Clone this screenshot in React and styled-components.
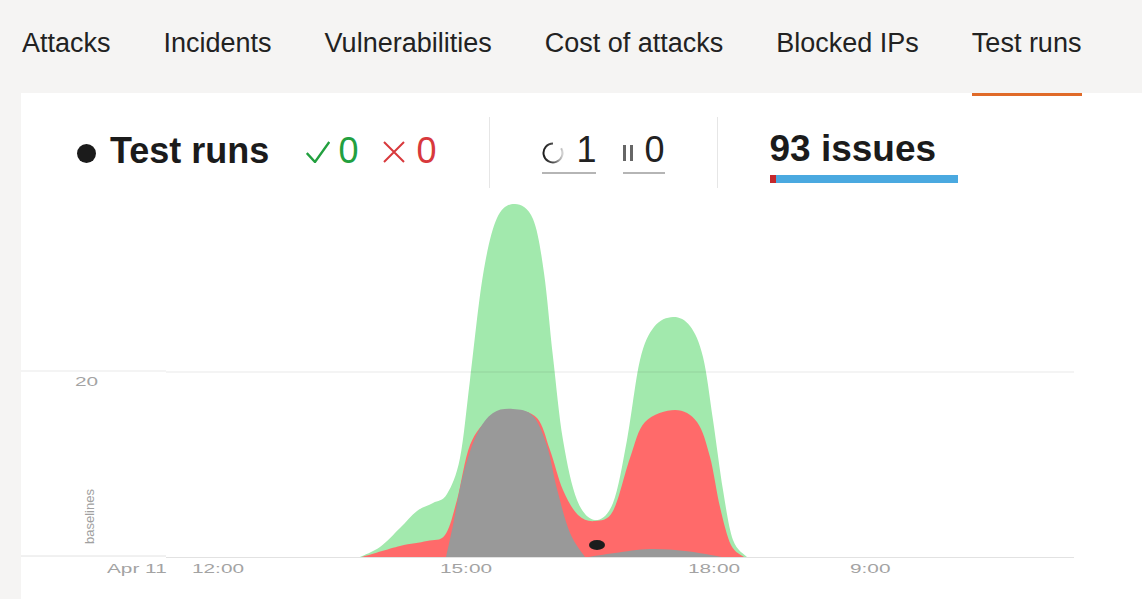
import React from "react";
import styled, { createGlobalStyle } from "styled-components";

const GlobalStyle = createGlobalStyle`
  html, body { margin: 0; padding: 0; }
  body {
    background: #f5f4f3;
    font-family: "Liberation Sans", Arial, sans-serif;
    overflow: hidden;
  }
`;

const Page = styled.div`
  width: 1142px;
  height: 599px;
  display: flex;
  flex-direction: column;
`;

const TabBar = styled.nav`
  display: flex;
  align-items: flex-start;
  gap: 53px;
  height: 93px;
  padding: 28px 0 0 22px;
  box-sizing: border-box;
`;

const Tab = styled.div`
  position: relative;
  font-size: 27px;
  line-height: 31px;
  color: #222;
  height: 65px;
  &::after {
    content: "";
    position: absolute;
    left: 0;
    right: -1px;
    bottom: -3px;
    height: 3px;
    background: ${(p) => (p.$active ? "#e06a28" : "transparent")};
  }
`;

const Panel = styled.section`
  flex: 1;
  margin-left: 21px;
  background: #fff;
  display: flex;
  flex-direction: column;
`;

const Header = styled.div`
  display: flex;
  height: 71px;
  margin: 24px 0 2px;
  padding-left: 56px;
`;

const TitleGroup = styled.div`
  display: flex;
  align-items: center;
  padding: 0 53px 4px 0;
`;

const Bullet = styled.span`
  width: 19px;
  height: 19px;
  border-radius: 50%;
  background: #1b1b1b;
  margin-right: 14px;
  margin-top: 6px;
`;

const Title = styled.h1`
  margin: 0 37px 0 0;
  font-size: 36px;
  line-height: 36px;
  font-weight: 700;
  color: #1b1b1b;
`;

const Num = styled.span`
  font-size: 36px;
  line-height: 36px;
  color: ${(p) => p.$color || "#222"};
`;

const Status = styled.span`
  display: inline-flex;
  align-items: center;
  gap: ${(p) => p.$gap}px;
  margin-left: ${(p) => p.$offset || 0}px;
  svg { display: block; margin-top: 2px; }
`;

const MiddleGroup = styled.div`
  display: flex;
  align-items: center;
  gap: 27px;
  padding: 0 52px 0 52px;
  border-left: 1px solid #e6e6e6;
  border-right: 1px solid #e6e6e6;
`;

const Counter = styled.span`
  display: inline-flex;
  align-items: center;
  gap: ${(p) => p.$gap}px;
  padding-bottom: 4px;
  border-bottom: 2px solid #b5b5b5;
  svg { display: block; margin-top: 6px; }
`;

const IssuesGroup = styled.div`
  display: flex;
  flex-direction: column;
  justify-content: center;
  padding: 9px 0 0 52px;
`;

const IssuesTitle = styled.div`
  font-size: 37px;
  line-height: 36px;
  font-weight: 700;
  color: #1b1b1b;
`;

const IssueBar = styled.div`
  display: flex;
  width: 188px;
  height: 8px;
  margin-top: 8px;
  background: #4aa9e0;
`;

const BarSegment = styled.span`
  width: ${(p) => p.$w}px;
  background: ${(p) => p.$color};
`;

const ChartSvg = styled.svg`
  display: block;
  width: 1121px;
  height: 409px;
  font-family: "Liberation Sans", Arial, sans-serif;
`;

function smooth(pts) {
  let d = `M${pts[0][0]},${pts[0][1]}`;
  for (let i = 0; i < pts.length - 1; i++) {
    const p0 = pts[i - 1] || pts[i];
    const p1 = pts[i];
    const p2 = pts[i + 1];
    const p3 = pts[i + 2] || p2;
    const c1x = p1[0] + (p2[0] - p0[0]) / 6;
    const c1y = p1[1] + (p2[1] - p0[1]) / 6;
    const c2x = p2[0] - (p3[0] - p1[0]) / 6;
    const c2y = p2[1] - (p3[1] - p1[1]) / 6;
    d += ` C${c1x.toFixed(1)},${c1y.toFixed(1)} ${c2x.toFixed(1)},${c2y.toFixed(1)} ${p2[0]},${p2[1]}`;
  }
  return d + " Z";
}

const GREEN = [
  [360, 557], [380, 547], [400, 528], [417, 511], [433, 503], [447, 494],
  [460, 458], [470, 380], [483, 275], [497, 218], [515, 204], [533, 219],
  [544, 273], [553, 357], [563, 440], [577, 500], [595, 520], [613, 503],
  [627, 440], [640, 360], [654, 327], [673, 317], [690, 326], [703, 357],
  [713, 420], [723, 490], [733, 540], [747, 557],
];

const RED = [
  [362, 557], [400, 546], [427, 541], [445, 535], [457, 500], [470, 445],
  [490, 418], [513, 410], [537, 418], [550, 450], [563, 490], [578, 515],
  [595, 521], [613, 511], [630, 458], [645, 422], [675, 410], [697, 422],
  [710, 457], [720, 507], [731, 545], [744, 557],
];

const GRAY = [
  [446, 557], [453, 525], [463, 475], [477, 434], [493, 413], [513, 409],
  [533, 416], [547, 446], [557, 489], [570, 533], [585, 557],
];

const GRAY2 = [
  [588, 557], [615, 553], [650, 549], [685, 551], [722, 557],
];

const XLabel = ({ x, children }) => (
  <g transform={`translate(${x},573) scale(1.6,1)`}>
    <text x="0" y="0" fontSize="13" fill="#a3a3a3">{children}</text>
  </g>
);

function Chart() {
  return (
    <ChartSvg viewBox="21 190 1121 409">
      <path d={smooth(GREEN)} fill="#a2e9ad" />
      <path d={smooth(RED)} fill="#ff6a6a" />
      <path d={smooth(GRAY)} fill="#999999" />
      <path d={smooth(GRAY2)} fill="#999999" />
      <ellipse cx="597" cy="545" rx="8" ry="5" fill="#1c1c1c" />
      <line x1="21" y1="371" x2="166" y2="371" stroke="rgba(0,0,0,0.09)" strokeWidth="1" />
      <line x1="166" y1="372" x2="1074" y2="372" stroke="rgba(0,0,0,0.09)" strokeWidth="1" />
      <line x1="21" y1="556" x2="166" y2="556" stroke="#e2e2e2" strokeWidth="1" />
      <line x1="166" y1="557.5" x2="1074" y2="557.5" stroke="#e2e2e2" strokeWidth="1" />
      <g transform="translate(75,386) scale(1.6,1)">
        <text x="0" y="0" fontSize="13" fill="#a3a3a3">20</text>
      </g>
      <text
        transform="translate(94,544) rotate(-90)"
        fontSize="13"
        fill="#a0a0a0"
      >
        baselines
      </text>
      <XLabel x={107}>Apr 11</XLabel>
      <XLabel x={192}>12:00</XLabel>
      <XLabel x={440}>15:00</XLabel>
      <XLabel x={688}>18:00</XLabel>
      <XLabel x={850}>9:00</XLabel>
    </ChartSvg>
  );
}

const CheckIcon = () => (
  <svg width="24" height="22" viewBox="0 0 24 22">
    <path d="M0.8,12 L9,21 L23.3,1" fill="none" stroke="#22a03f" strokeWidth="2.4" />
  </svg>
);

const CrossIcon = () => (
  <svg width="22" height="22" viewBox="0 0 22 22">
    <path d="M1,1 L21,21 M21,1 L1,21" fill="none" stroke="#d8393c" strokeWidth="2" />
  </svg>
);

const SpinnerIcon = () => (
  <svg width="22" height="22" viewBox="0 0 22 22">
    <defs>
      <linearGradient id="spin" x1="0" y1="0" x2="1" y2="0">
        <stop offset="0" stopColor="#1e1e1e" />
        <stop offset="0.55" stopColor="#555" />
        <stop offset="1" stopColor="#d0d0d0" />
      </linearGradient>
    </defs>
    <path d="M19.23,6.25 A9.5,9.5 0 1 1 11,1.5" fill="none" stroke="url(#spin)" strokeWidth="2" />
  </svg>
);

const PauseIcon = () => (
  <svg width="11" height="17" viewBox="0 0 11 17">
    <rect x="0" y="1" width="3" height="16" fill="#666" />
    <rect x="7" y="1" width="3" height="16" fill="#666" />
  </svg>
);

const TABS = ["Attacks", "Incidents", "Vulnerabilities", "Cost of attacks", "Blocked IPs", "Test runs"];

export default function App() {
  return (
    <Page>
      <GlobalStyle />
      <TabBar>
        {TABS.map((t) => (
          <Tab key={t} $active={t === "Test runs"}>{t}</Tab>
        ))}
      </TabBar>
      <Panel>
        <Header>
          <TitleGroup>
            <Bullet />
            <Title>Test runs</Title>
            <Status $gap={8}>
              <CheckIcon />
              <Num $color="#22a03f">0</Num>
            </Status>
            <Status $gap={11} $offset={25}>
              <CrossIcon />
              <Num $color="#d8393c">0</Num>
            </Status>
          </TitleGroup>
          <MiddleGroup>
            <Counter $gap={12}>
              <SpinnerIcon />
              <Num>1</Num>
            </Counter>
            <Counter $gap={10}>
              <PauseIcon />
              <Num>0</Num>
            </Counter>
          </MiddleGroup>
          <IssuesGroup>
            <IssuesTitle>93 issues</IssuesTitle>
            <IssueBar>
              <BarSegment $w={6} $color="#c4282c" />
            </IssueBar>
          </IssuesGroup>
        </Header>
        <Chart />
      </Panel>
    </Page>
  );
}
